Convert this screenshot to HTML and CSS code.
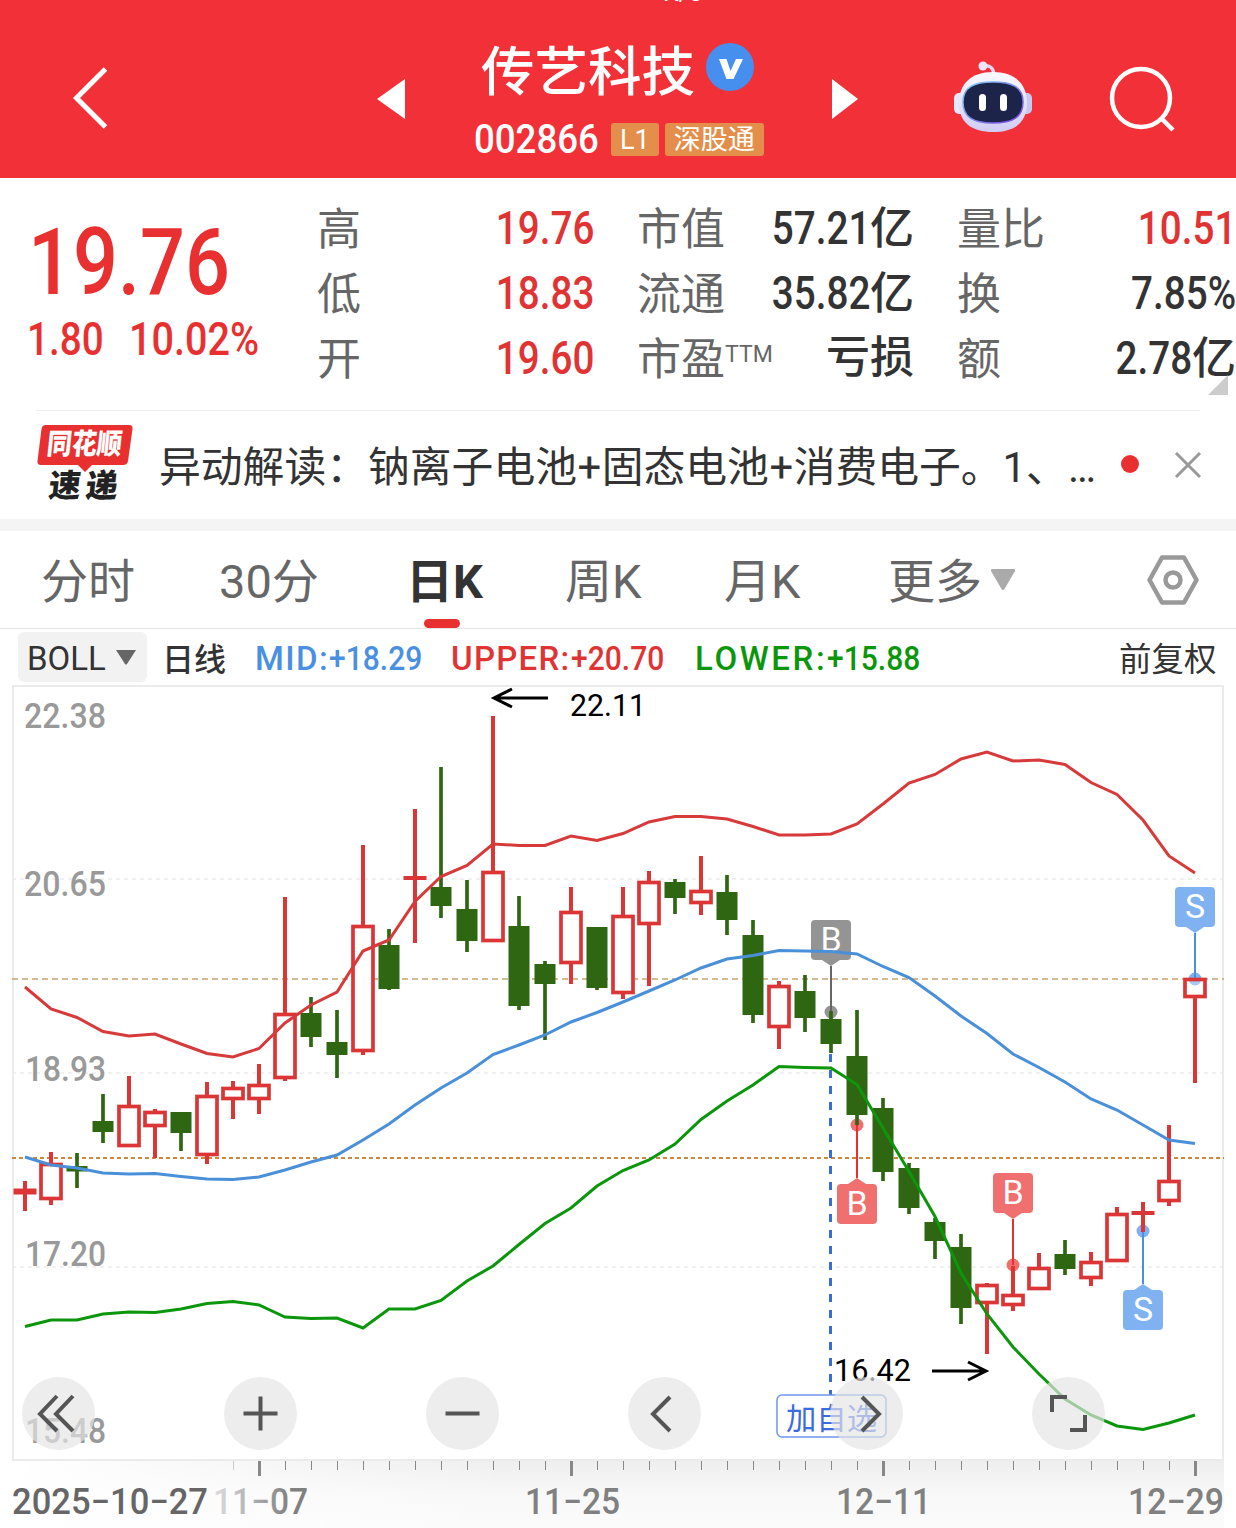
FILE: index.html
```html
<!DOCTYPE html>
<html lang="zh-CN">
<head>
<meta charset="UTF-8">
<meta name="viewport" content="width=device-width, initial-scale=1.0">
<title>传艺科技 002866</title>
<link rel="stylesheet" href="styles.css">
</head>
<body>

<!-- Header -->
<header>
    <div class="net-speed">K/s</div>
    <svg class="back" width="40" height="64" viewBox="0 0 40 64"><path d="M35.500 3L6.500 32L35.500 61" fill="none" stroke="#fff" stroke-width="5"/></svg>
    <svg class="prev" width="28" height="42" viewBox="0 0 28 42"><path d="M28 1V41L0 21Z" fill="#fff"/></svg>
    <div class="title">
        <div class="name">
            <span>传艺科技</span>
            <svg width="48" height="48" viewBox="0 0 48 48"><circle cx="24" cy="24" r="24" fill="#468fee"/><path d="M13 16H20.500L24.500 28L30 16H37L27.500 36H20.500Z" fill="#fff"/></svg>
        </div>
        <div class="code"><span class="num">002866</span><b>L1</b><b>深股通</b></div>
    </div>
    <svg class="next" width="26" height="42" viewBox="0 0 26 42"><path d="M0 1V41L26 21Z" fill="#fff"/></svg>
    <svg class="robot" width="80" height="74" viewBox="0 0 80 74">
        <defs>
            <linearGradient id="shell" x1="0" y1="0" x2="0" y2="1"><stop offset="0" stop-color="#fbf9ff"/><stop offset="1" stop-color="#cfcdf4"/></linearGradient>
            <linearGradient id="rim" x1="0" y1="0" x2="1" y2="1"><stop offset="0" stop-color="#7fd0f5"/><stop offset="1" stop-color="#7a3fe0"/></linearGradient>
        </defs>
        <path d="M30 6Q40 4 41 15" fill="none" stroke="#e3d8f3" stroke-width="3.500"/>
        <circle cx="30" cy="6" r="4.500" fill="#f1e6f7"/>
        <rect x="1" y="33" width="12" height="21" rx="5" fill="#e9e7fb"/>
        <rect x="67" y="33" width="12" height="21" rx="5" fill="#c9c8f3"/>
        <path d="M40 12C62 12 74 24 74 43C74 63 61 72 40 72C19 72 6 63 6 43C6 24 18 12 40 12Z" fill="url(#shell)"/>
        <path d="M40 22C59 22 70 27 70 42C70 57 60 63 40 63C20 63 10 57 10 42C10 27 21 22 40 22Z" fill="#1d2449" stroke="url(#rim)" stroke-width="1.500"/>
        <rect x="26" y="34" width="7" height="17" rx="3.500" fill="#fff"/>
        <rect x="47" y="34" width="7" height="17" rx="3.500" fill="#fff"/>
    </svg>
    <svg class="search" width="68" height="68" viewBox="0 0 68 68"><g fill="none" stroke="#fff" stroke-width="4.500"><circle cx="33" cy="32" r="29"/><path d="M53 52L65 64"/></g></svg>
</header>

<!-- Quote -->
<section class="quote">
    <div class="price">
        <div class="last"><span class="num">19.76</span></div>
        <div class="change"><span class="num">1.80</span><span class="num">10.02%</span></div>
    </div>
    <dl>
        <dt>高</dt><dd class="red"><span class="num">19.76</span></dd>
        <dt>低</dt><dd class="red"><span class="num">18.83</span></dd>
        <dt>开</dt><dd class="red"><span class="num">19.60</span></dd>
    </dl>
    <dl>
        <dt>市值</dt><dd><span class="num">57.21</span>亿</dd>
        <dt>流通</dt><dd><span class="num">35.82</span>亿</dd>
        <dt>市盈<sup>TTM</sup></dt><dd>亏损</dd>
    </dl>
    <dl>
        <dt>量比</dt><dd class="red"><span class="num">10.51</span></dd>
        <dt>换</dt><dd><span class="num">7.85%</span></dd>
        <dt>额</dt><dd><span class="num">2.78</span>亿</dd>
    </dl>
    <i class="corner"></i>
</section>

<!-- News -->
<section class="news">
    <div class="logo">
        <svg width="96" height="48" viewBox="0 0 96 48"><path d="M9 1H92Q96 1 95.500 5L91 37Q90.500 41 86 41H55L48 48L41 41H4Q0 41 0.500 37L4.500 5Q5 1 9 1Z" fill="#e83030"/></svg>
        <span class="logo-top">同花顺</span>
        <span class="logo-bottom">速递</span>
    </div>
    <p>异动解读：钠离子电池<span>+</span>固态电池<span>+</span>消费电子。1、…</p>
    <i class="dot"></i>
    <svg width="28" height="28" viewBox="0 0 28 28"><path d="M2 2L26 26M26 2L2 26" stroke="#999" stroke-width="3"/></svg>
</section>

<!-- Period tabs -->
<nav>
    <span>分时</span>
    <span>30分</span>
    <span class="active">日K</span>
    <span>周K</span>
    <span>月K</span>
    <span>更多</span>
    <svg class="more" width="24" height="21" viewBox="0 0 24 21"><path d="M1 0H23Q24.500 0 24 2L13.500 20Q12 22 10.500 20L0 2Q-.5 0 1 0Z" fill="#aaa"/></svg>
    <svg class="setting" width="52" height="50" viewBox="0 0 52 50"><g fill="none" stroke="#999" stroke-width="4.500" stroke-linejoin="round"><path d="M15 2.500H37L49.500 25L37 47.500H15L2.500 25Z"/><circle cx="26" cy="25" r="7.500"/></g></svg>
</nav>

<!-- Indicator -->
<section class="indicator">
    <div class="select">BOLL<svg width="20" height="15" viewBox="0 0 20 15"><path d="M0 0H20L11 14Q10 15 9 14Z" fill="#666"/></svg></div>
    <span class="line">日线</span>
    <span class="mid">MID:<span class="num">+18.29</span></span>
    <span class="upper">UPPER:<span class="num">+20.70</span></span>
    <span class="lower">LOWER:<span class="num">+15.88</span></span>
    <span class="adjust">前复权</span>
</section>

<!-- Chart -->
<main>
    <svg id="chart" width="1236" height="843" viewBox="0 685 1236 843"></svg>
    <div class="tools">
        <button><svg viewBox="0 0 73 73"><path d="M35 19L18 37L35 54M51 19L34 37L51 54"/></svg></button>
        <button><svg viewBox="0 0 73 73"><path d="M19.500 36.500H53.500M36.500 19.500V53.500"/></svg></button>
        <button><svg viewBox="0 0 73 73"><path d="M19.500 36.500H53.500"/></svg></button>
        <button><svg viewBox="0 0 73 73"><path d="M42 20L25 37L42 54"/></svg></button>
        <button><svg viewBox="0 0 73 73"><path d="M32 20L49 37L32 54"/></svg></button>
        <button><svg viewBox="0 0 73 73"><path d="M20 35V20H35M38 53H53V38"/></svg></button>
    </div>
</main>

<script src="chart.js"></script>
</body>
</html>
```
FILE: styles.css
```css
/* BASE */
body {
    margin: 0;
    width: 1236px;
    height: 1528px;
    overflow: hidden;
    background-color: #fff;
    color: #333;
    font-family: Roboto, "Noto Sans CJK SC", sans-serif;
}
svg {
    display: block;
    flex: none;
}
.num {
    display: inline-block;
    font-weight: 500;
    transform: scaleX(.84);
    transform-origin: right;
}
.red {
    color: #e03434;
}

/* HEADER */
header {
    position: relative;
    display: flex;
    align-items: flex-start;
    height: 178px;
    background-color: #f23038;
    color: #fff;
    overflow: hidden;
}
.net-speed {
    position: absolute;
    left: 663px;
    top: -21px;
    font-size: 25px;
    line-height: 28px;
}
.back {
    margin: 66px 0 0 70px;
}
.prev {
    margin: 78px 0 0 267px;
}
.title {
    width: 426px;
    height: 178px;
}
.name {
    display: flex;
    padding: 37px 0 0 76px;
    font-size: 53.5px;
    line-height: 72px;
    font-weight: 500;
}
.name svg {
    margin: 6px 0 0 11px;
}
.code {
    display: flex;
    align-items: center;
    margin-top: 12px;
    padding-left: 69px;
    height: 36px;
    font-size: 40px;
}
.code .num {
    transform: scaleX(.915);
    transform-origin: left;
    width: 137px;
}
.code b {
    height: 33px;
    margin-right: 6px;
    padding: 0 9px;
    border-radius: 3px;
    background-color: #e38f4b;
    font-size: 27px;
    line-height: 34px;
    font-weight: 400;
}
.next {
    margin: 78px 0 0 1px;
}
.robot {
    margin: 60px 0 0 95px;
}
.search {
    margin: 66px 0 0 75px;
}

/* QUOTE */
.quote {
    position: relative;
    display: flex;
    height: 232px;
}
.price {
    flex: none;
    width: 317px;
    color: #e83030;
}
.price .num {
    transform-origin: left;
}
.last {
    margin: 31px 0 0 28px;
    font-size: 92px;
    line-height: 108px;
}
.last .num {
    transform: scaleX(.86);
}
.change {
    display: flex;
    padding-left: 27px;
    font-size: 46px;
    line-height: 44px;
}
.change .num:first-child {
    width: 102px;
}
.change .num:last-child {
    transform: scaleX(.86);
}
dl {
    flex: none;
    display: grid;
    grid-template-columns: auto 1fr;
    grid-auto-rows: 65px;
    margin: 18px 43px 0 0;
    width: 277px;
    font-size: 44px;
    line-height: 65px;
}
dl:last-of-type {
    margin-right: 0;
    width: 279px;
}
dt {
    position: relative;
    top: 2px;
    color: #666;
    white-space: nowrap;
}
dd {
    margin: 0;
    font-weight: 500;
    text-align: right;
    white-space: nowrap;
}
dd .num {
    margin-left: -.5em;
    font-size: 46px;
}
sup {
    font-size: 23px;
    line-height: 0;
    vertical-align: 13px;
}
.corner {
    position: absolute;
    right: 8px;
    bottom: 15px;
    border-left: 20px solid transparent;
    border-bottom: 20px solid #ccc;
}

/* NEWS */
.news {
    display: flex;
    margin: 0 34px 0 36px;
    height: 108px;
    position: relative;
}
.news::before {
    content: "";
    position: absolute;
    left: 0;
    right: 2px;
    top: 0;
    height: 1px;
    background-color: #eee;
}
.logo {
    flex: none;
    position: relative;
    width: 96px;
    height: 80px;
    margin: 14px 26px 0 1px;
    font-weight: 900;
    white-space: nowrap;
}
.logo-top,
.logo-bottom {
    position: absolute;
}
.logo-top {
    left: 10px;
    top: 3px;
    color: #fff;
    font-size: 25px;
    line-height: 36px;
    transform: skewX(-6deg) scaleY(1.15);
}
.logo-bottom {
    left: 12px;
    top: 43px;
    color: #222;
    font-size: 32px;
    line-height: 38px;
    letter-spacing: 5px;
    transform: skewX(-6deg);
}
.news p {
    flex: none;
    margin: 0;
    width: 962px;
    font-size: 41.8px;
    line-height: 115px;
    white-space: nowrap;
}
.news p span {
    padding: 0 .5px;
}
.dot {
    flex: none;
    width: 18px;
    height: 18px;
    margin: 45px 35px 0 0;
    border-radius: 50%;
    background-color: #e83030;
}
.news > svg {
    margin-top: 41px;
}

/* TABS */
nav {
    display: flex;
    height: 97px;
    margin-top: 1px;
    padding-left: 41px;
    border-top: 12px solid #f4f4f4;
    border-bottom: 1px solid #e6e6e6;
    font-size: 47px;
    line-height: 101px;
    color: #666;
}
nav span {
    position: relative;
    flex: none;
    width: 159px;
}
nav span:first-child {
    width: 178px;
}
nav span:nth-child(2) {
    width: 187px;
}
nav span:nth-child(5) {
    width: 164px;
}
nav span:nth-child(6) {
    width: 103px;
}
nav .active {
    color: #333;
    font-weight: 700;
}
.active::after {
    content: "";
    position: absolute;
    left: 18px;
    bottom: 0;
    width: 36px;
    height: 9px;
    border-radius: 5px;
    background-color: #e83030;
}
.more {
    margin-top: 38px;
}
.setting {
    margin: 24px 0 0 132px;
}

/* INDICATOR */
.indicator {
    display: flex;
    height: 56px;
    padding-left: 18px;
    font-size: 33px;
    line-height: 60px;
    white-space: nowrap;
}
.indicator > * {
    flex: none;
}
.indicator .num {
    letter-spacing: 0;
    transform: scaleX(.91);
    transform-origin: left;
}
.select {
    display: flex;
    width: 120px;
    height: 50px;
    margin-top: 3px;
    padding-left: 9px;
    border-radius: 6px;
    background-color: #f2f2f2;
    line-height: 53px;
}
.select svg {
    margin: 18px 0 0 10px;
}
.line {
    width: 92px;
    margin-left: 15px;
    font-size: 32px;
    line-height: 62px;
    font-weight: 500;
}
.mid {
    width: 196px;
    margin-left: 1px;
    color: #4a90e2;
    font-weight: 500;
    letter-spacing: 1.4px;
}
.upper {
    width: 244px;
    color: #e03434;
    font-weight: 500;
    letter-spacing: 1.3px;
}
.lower {
    width: 424px;
    color: #0c960c;
    font-weight: 500;
    letter-spacing: 2.6px;
}
.adjust {
    font-size: 32.5px;
    line-height: 62px;
}

/* CHART */
main {
    position: relative;
}
.tools {
    position: absolute;
    left: 22px;
    top: 692px;
    display: flex;
    gap: 129px;
}
.tools button {
    width: 73px;
    height: 73px;
    padding: 0;
    border: 0;
    border-radius: 50%;
    background-color: rgba(228, 228, 228, .68);
}
.tools path {
    fill: none;
    stroke: #555;
    stroke-width: 4;
}
```
FILE: chart.js
```js
// one row per day: colour, high, body top, body bottom, low
const candles = [
    ['r', 1181, 1188.5, 1194.5, 1211], ['r', 1152, 1163, 1200, 1205], ['g', 1153, 1166, 1171.5, 1188],
    ['g', 1094, 1121, 1132, 1143], ['r', 1076, 1105, 1147, 1147], ['r', 1109, 1111, 1127, 1158],
    ['g', 1112, 1112, 1133, 1151], ['r', 1082, 1095, 1156, 1164], ['r', 1081, 1087, 1100, 1119],
    ['r', 1064, 1084, 1100, 1114], ['r', 897, 1013, 1079, 1081], ['g', 997, 1013, 1037, 1047],
    ['g', 1010, 1042, 1055, 1078], ['r', 845, 925, 1052, 1055], ['g', 929, 945, 989, 990],
    ['r', 809, 876, 880, 943], ['g', 767, 887, 906, 918], ['g', 880, 909, 941, 952],
    ['r', 716, 871, 942, 942], ['g', 896, 926, 1006, 1010], ['g', 961, 964, 984, 1040],
    ['r', 887, 911, 964, 984], ['g', 927, 927, 988, 990], ['r', 887, 915, 994, 999],
    ['r', 871, 881, 925, 986], ['g', 879, 882, 898, 914], ['r', 856, 890, 904, 915],
    ['g', 875, 892, 920, 935], ['g', 920, 935, 1015, 1023], ['r', 981, 985, 1028, 1049],
    ['g', 975, 991, 1018, 1032], ['g', 1011, 1019, 1044, 1053], ['g', 1010, 1056, 1115, 1125],
    ['g', 1098, 1108, 1172, 1181], ['g', 1163, 1168, 1208, 1214], ['g', 1218, 1222, 1241, 1259],
    ['g', 1234, 1247, 1308, 1324], ['r', 1283, 1284, 1304, 1354], ['r', 1266, 1294, 1306, 1311],
    ['r', 1253, 1267, 1290, 1290], ['g', 1240, 1254, 1269, 1275], ['r', 1252, 1261, 1279, 1286],
    ['r', 1207, 1213, 1262, 1262], ['r', 1202, 1211, 1215, 1232], ['r', 1125, 1180, 1202, 1206],
    ['r', 978, 978, 998, 1083]
];

const upper = [987, 1009, 1017.5, 1031.5, 1036, 1034, 1044, 1053.5, 1057, 1048.5, 1023, 1005, 992, 951, 940, 901.5,
    876.5, 865.5, 844, 845.5, 845.5, 836, 840.5, 833.5, 822, 816.5, 816.5, 819, 826.5, 835, 835, 834, 824, 804, 783,
    774.5, 759, 752, 761, 760, 764.5, 782.5, 794.5, 820, 856, 873];
const mid = [1157, 1165, 1168, 1173, 1174, 1173.5, 1176.5, 1179, 1179.5, 1177, 1170, 1162, 1155, 1140, 1124, 1105,
    1088, 1073, 1054.5, 1045, 1035, 1022, 1012.5, 1002, 991, 980, 968, 959, 955.5, 950.5, 951, 951.5, 954, 966.5,
    977.5, 996, 1016, 1033.5, 1054, 1067.5, 1082, 1099, 1110, 1125, 1140, 1143.5];
const lower = [1326.5, 1320, 1320, 1314, 1312, 1312.5, 1309, 1303.5, 1301.5, 1305, 1317, 1318.5, 1318, 1328, 1309,
    1309, 1300.5, 1281, 1266, 1244.5, 1223.5, 1208, 1186, 1170.5, 1160, 1144, 1119.5, 1101, 1085, 1066.5, 1067.5,
    1068, 1084.5, 1128, 1171.5, 1216.5, 1273, 1314, 1347, 1374, 1399, 1415, 1426, 1429.5, 1423, 1415];

// day, dot y, badge top, letter, badge colour, stem colour
const marks = [
    [31, 1012, 920, 'B', '#949494', '#666'],
    [32, 1125, 1184, 'B', '#f07070', '#e83030'],
    [38, 1265, 1173, 'B', '#f07070', '#e83030'],
    [43, 1231, 1290, 'S', '#80b2f1', '#4a90e2'],
    [45, 979, 887, 'S', '#80b2f1', '#4a90e2']
];

const dayX = i => 25 + 26 * i;
let out = '';

function hline(y, color, dash, width) {
    out += `<path d="M12 ${y}H1224" stroke="${color}" stroke-width="${width}" stroke-dasharray="${dash}"/>`;
}

// x is the left edge, length the drawn width
function label(text, x, y, size, length, color, weight) {
    out += `<text x="${x}" y="${y}" font-size="${size}" textLength="${length}" lengthAdjust="spacingAndGlyphs" fill="${color}" font-weight="${weight}">${text}</text>`;
}

function curve(values, color) {
    const points = values.map((y, i) => dayX(i) + ',' + y).join(' ');
    out += `<polyline points="${points}" fill="none" stroke="${color}" stroke-width="3"/>`;
}

// date axis background
out += `<defs>
    <linearGradient id="axisBg" x1="0" y1="0" x2="0" y2="1"><stop offset="0" stop-color="#eeeeee"/><stop offset=".5" stop-color="#f8f8f8"/><stop offset="1" stop-color="#fbfbfb"/></linearGradient>
    <linearGradient id="axisFade" x1="0" x2="1"><stop offset="0" stop-color="#fff"/><stop offset=".25" stop-color="#fff" stop-opacity=".75"/><stop offset="1" stop-color="#fff" stop-opacity="0"/></linearGradient>
    <linearGradient id="dateFade" gradientUnits="userSpaceOnUse" x1="205" x2="290"><stop offset="0" stop-color="#e8e8e8"/><stop offset="1" stop-color="#808080"/></linearGradient>
</defs>
<rect x="12" y="1461" width="1212" height="67" fill="url(#axisBg)"/>
<rect x="12" y="1461" width="500" height="67" fill="url(#axisFade)"/>
<rect x="13" y="686" width="1210" height="774" fill="none" stroke="#ebebeb" stroke-width="2"/>`;

// grid
[879, 1073, 1267].forEach(y => hline(y, '#ebebeb', '4 4', 1.5));
hline(979, '#c9a26c', '6 4', 1.7);
hline(1158, '#c98a3c', '4 3', 2);

label('22.38', 24, 728, 35, 82, '#999', 500);
label('20.65', 24, 896, 35, 82, '#999', 500);
label('18.93', 25, 1081, 35, 81, '#999', 500);
label('17.20', 25, 1266, 35, 81, '#999', 500);
label('15.48', 25, 1443, 35, 81, '#999', 500);

// add-to-watchlist line
out += `<path d="M830.500 1054V1395" stroke="#3b6be0" stroke-width="3" stroke-dasharray="8 8"/>
<rect x="777" y="1395" width="109" height="42" rx="5" fill="#fff" stroke="#6f96ea" stroke-width="1.500"/>`;
label('加自选', 786, 1429, 30, 91, '#3b6be0', 400);

// trade marks
marks.forEach(([day, dot, top, letter, fill, stem]) => {
    const x = dayX(day);
    const below = top > dot;
    const tip = below ? top - 6 : top + 46;
    const base = below ? top : top + 40;
    out += `<rect x="${x - 20}" y="${top}" width="40" height="40" rx="4" fill="${fill}"/>
    <path d="M${x - 9} ${base}L${x} ${tip}L${x + 9} ${base}Z" fill="${fill}"/>
    <text x="${x}" y="${top + 31}" font-size="34" text-anchor="middle" fill="#fff">${letter}</text>
    <circle cx="${x}" cy="${dot}" r="6.500" fill="${fill}"/>
    <path d="M${x} ${tip}V${dot}" stroke="${stem}" stroke-width="2"/>`;
});

// candles
candles.forEach(([type, high, top, bottom, low], i) => {
    const x = dayX(i);
    if (type === 'g') {
        out += `<path d="M${x} ${high}V${low}" stroke="#2f6612" stroke-width="3.700"/>
        <rect x="${x - 10.5}" y="${top}" width="21" height="${bottom - top}" fill="#2f6612"/>`;
    } else if (bottom - top < 7) {
        out += `<path d="M${x} ${high}V${low}" stroke="#dc3535" stroke-width="4"/>
        <rect x="${x - 11.5}" y="${top}" width="23" height="${bottom - top}" fill="#dc3535"/>`;
    } else {
        out += `<path d="M${x} ${high}V${top + 1}M${x} ${bottom - 1}V${low}" stroke="#dc3535" stroke-width="4"/>
        <rect x="${x - 10}" y="${top + 1.5}" width="20" height="${bottom - top - 3}" fill="#fff" fill-opacity="${i === 45 ? .3 : 1}" stroke="#dc3535" stroke-width="3.700"/>`;
    }
});

curve(upper, '#d63a3a');
curve(mid, '#4a90d9');
curve(lower, '#0c960c');

// highest and lowest price
out += '<path d="M548 698H494M512 689L494 698L512 707M932 1371H986M968 1362L986 1371L968 1380" fill="none" stroke="#000" stroke-width="3"/>';
label('22.11', 570, 716, 30.5, 76, '#000', 400);
label('16.42', 834, 1381, 30.5, 77, '#000', 400);

// date axis ticks
for (let i = 8; i <= 45; i++) {
    const major = i === 9 || i === 21 || i === 33 || i === 45;
    out += `<path d="M${dayX(i) + .5} 1461V${major ? 1476 : 1470}" stroke="#888" stroke-opacity="${i === 8 ? .4 : 1}" stroke-width="${major ? 3 : 1}"/>`;
}
label('2025−10−27', 12, 1514, 36, 196, '#666', 500);
label('11−07', 213, 1514, 36, 95, 'url(#dateFade)', 500);
label('11−25', 525, 1514, 36, 95, '#808080', 500);
label('12−11', 836, 1514, 36, 95, '#808080', 500);
label('12−29', 1128, 1514, 36, 96, '#808080', 500);

document.getElementById('chart').innerHTML = out;
```
